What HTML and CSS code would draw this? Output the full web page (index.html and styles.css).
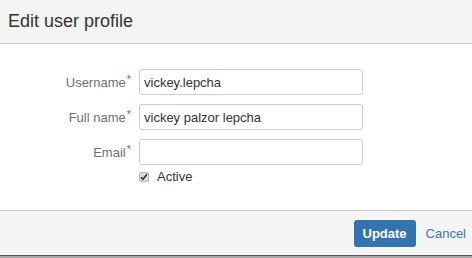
FILE: index.html
```html
<!DOCTYPE html>
<html lang="en">
<head>
    <meta charset="UTF-8">
    <meta name="viewport" content="width=device-width, initial-scale=1.0">
    <title>Edit user profile</title>
    <link rel="stylesheet" href="styles.css">
</head>
<body>
    <div class="dialog">
        <div class="dialog-header">
            <h2 class="dialog-title">Edit user profile</h2>
        </div>

        <form class="dialog-body">
            <div class="form-grid">
                <label class="field-label" for="username">Username<span class="req">*</span></label>
                <input type="text" id="username" class="text-input" value="vickey.lepcha">

                <label class="field-label" for="fullname">Full name<span class="req">*</span></label>
                <input type="text" id="fullname" class="text-input" value="vickey palzor lepcha">

                <label class="field-label" for="email">Email<span class="req">*</span></label>
                <input type="text" id="email" class="text-input" value="">

                <span></span>
                <label class="check-row">
                    <span class="check-box">
                        <svg width="8" height="8" viewBox="0 0 8 8"><path d="M1 4.2 L3 6.3 L7 1.3" fill="none" stroke="#333" stroke-width="1.6"/></svg>
                    </span>
                    Active
                </label>
            </div>
        </form>

        <div class="dialog-footer">
            <button class="btn-primary">Update</button>
            <a href="#" class="cancel-link">Cancel</a>
        </div>
        <div class="page-behind"></div>
    </div>
</body>
</html>
```

FILE: styles.css
```css
body {
    margin: 0;
    font-family: "Liberation Sans", Arial, sans-serif;
    background: #fff;
}
.dialog {
    width: 472px;
}
.dialog-header {
    height: 43px;
    background: #f4f4f4;
    border-bottom: 1px solid #cccccc;
    display: flex;
    align-items: center;
    padding-left: 8px;
}
.dialog-title {
    margin: 0;
    font-size: 18px;
    font-weight: normal;
    color: #333;
}
.dialog-body {
    margin: 0;
    padding: 25px 0 23px;
    background: #fff;
}
.form-grid {
    display: grid;
    grid-template-columns: 131px 224px;
    column-gap: 8px;
    row-gap: 9px;
    align-items: center;
}
.field-label {
    text-align: right;
    font-size: 13px;
    color: #707070;
}
.req {
    color: #d04437;
    font-size: 11px;
    vertical-align: top;
    position: relative;
    top: -2px;
    margin-left: 1px;
}
.text-input {
    box-sizing: border-box;
    height: 26px;
    width: 224px;
    border: 1px solid #cccccc;
    border-radius: 3px;
    padding: 0 4px;
    font-family: "Liberation Sans", Arial, sans-serif;
    font-size: 13px;
    color: #333;
}
.check-row {
    display: flex;
    align-items: center;
    gap: 8px;
    font-size: 13px;
    color: #333;
    margin-top: -5px;
    margin-bottom: 3px;
    height: 15px;
}
.check-box {
    box-sizing: border-box;
    width: 10px;
    height: 10px;
    background: #dcdcdc;
    border: 1px solid #b5b5b5;
    border-radius: 2px;
    display: flex;
    align-items: center;
    justify-content: center;
}
.dialog-footer {
    height: 44px;
    background: #f4f4f4;
    border-top: 1px solid #cccccc;
    display: flex;
    align-items: center;
    justify-content: flex-end;
    padding-right: 6px;
    gap: 10px;
}
.btn-primary {
    height: 27px;
    width: 62px;
    margin-top: 1px;
    background: #3572b0;
    color: #fff;
    border: none;
    border-radius: 3px;
    font-family: "Liberation Sans", Arial, sans-serif;
    font-size: 13px;
    font-weight: bold;
    cursor: pointer;
}
.cancel-link {
    color: #3b73af;
    font-size: 13px;
    text-decoration: none;
}
.page-behind {
    height: 3px;
    background: #a9a9a9;
    border-top: 1px solid #555;
}
```
